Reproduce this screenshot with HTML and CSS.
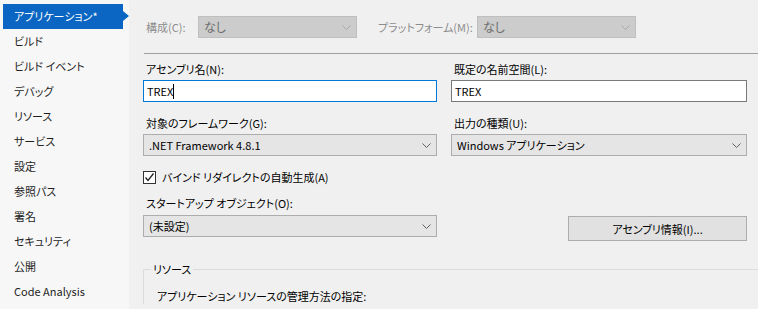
FILE: index.html
```html
<!DOCTYPE html>
<html lang="ja">
<head>
    <meta charset="UTF-8">
    <title>プロジェクト プロパティ - アプリケーション</title>
    <link rel="stylesheet" href="styles.css">
</head>
<body>
    <div class="window">
        <nav class="tabs">
            <div class="tab active">アプリケーション*</div>
            <div class="tab">ビルド</div>
            <div class="tab">ビルド イベント</div>
            <div class="tab">デバッグ</div>
            <div class="tab">リソース</div>
            <div class="tab">サービス</div>
            <div class="tab">設定</div>
            <div class="tab">参照パス</div>
            <div class="tab">署名</div>
            <div class="tab">セキュリティ</div>
            <div class="tab">公開</div>
            <div class="tab">Code Analysis</div>
        </nav>

        <main class="page">
            <div class="config-bar">
                <span class="config-label">構成(C):</span>
                <div class="combo disabled config-combo">なし<svg class="chevron" width="9" height="5" viewBox="0 0 9 5"><polyline points="0.5,0.5 4.5,4.5 8.5,0.5"/></svg></div>
                <span class="config-label platform">プラットフォーム(M):</span>
                <div class="combo disabled config-combo">なし<svg class="chevron" width="9" height="5" viewBox="0 0 9 5"><polyline points="0.5,0.5 4.5,4.5 8.5,0.5"/></svg></div>
            </div>

            <div class="form">
                <div class="field">
                    <label>アセンブリ名(N):</label>
                    <div class="textbox focused">TREX<span class="caret"></span></div>
                </div>
                <div class="field">
                    <label>既定の名前空間(L):</label>
                    <div class="textbox">TREX</div>
                </div>

                <div class="field">
                    <label>対象のフレームワーク(G):</label>
                    <div class="combo">.NET Framework 4.8.1<svg class="chevron" width="9" height="5" viewBox="0 0 9 5"><polyline points="0.5,0.5 4.5,4.5 8.5,0.5"/></svg></div>
                </div>
                <div class="field">
                    <label>出力の種類(U):</label>
                    <div class="combo">Windows アプリケーション<svg class="chevron" width="9" height="5" viewBox="0 0 9 5"><polyline points="0.5,0.5 4.5,4.5 8.5,0.5"/></svg></div>
                </div>

                <div class="check-row">
                    <span class="checkbox"><svg width="11" height="11" viewBox="0 0 11 11"><polyline points="1.5,5.5 4,8.5 9.5,1.5"/></svg></span>
                    <span>バインド リダイレクトの自動生成(A)</span>
                </div>

                <div class="field startup">
                    <label>スタートアップ オブジェクト(O):</label>
                    <div class="combo">(未設定)<svg class="chevron" width="9" height="5" viewBox="0 0 9 5"><polyline points="0.5,0.5 4.5,4.5 8.5,0.5"/></svg></div>
                </div>
                <div class="field button-cell">
                    <button class="button">アセンブリ情報(I)...</button>
                </div>
            </div>

            <fieldset class="group">
                <legend>リソース</legend>
                <p>アプリケーション リソースの管理方法の指定:</p>
            </fieldset>
        </main>
    </div>
</body>
</html>
```

FILE: styles.css
```css
* {
    margin: 0;
    padding: 0;
    box-sizing: border-box;
}

body {
    font-family: "Noto Sans CJK JP", "Noto Sans", sans-serif;
    font-size: 11px;
    font-feature-settings: "palt";
    color: #000;
    background: #f0f0f0;
    overflow: hidden;
}

.window {
    display: flex;
    width: 758px;
    height: 309px;
}

/* left tabs */
.tabs {
    width: 129px;
    flex-shrink: 0;
    background: #f7f7f7;
    padding: 4px 0 0 3px;
}

.tab {
    position: relative;
    width: 120px;
    height: 25px;
    line-height: 25px;
    padding-left: 11px;
    color: #1e1e1e;
    white-space: nowrap;
}

.tab.active {
    background: #0a66c2;
    color: #fff;
}

.tab.active::after {
    content: "";
    position: absolute;
    right: -6px;
    top: 7px;
    border-top: 5px solid transparent;
    border-bottom: 5px solid transparent;
    border-left: 6px solid #0a66c2;
}

/* right page */
.page {
    flex: 1;
    padding: 16px 12px 0 14px;
}

.config-bar {
    display: flex;
    align-items: center;
    height: 22px;
}

.config-label {
    flex-shrink: 0;
    color: #8d8d8d;
    width: 55px;
    padding-left: 3px;
    white-space: nowrap;
}

.config-label.platform {
    width: 99px;
    margin-left: 21px;
    padding-left: 0;
}

.combo {
    position: relative;
    flex-shrink: 0;
    height: 22px;
    line-height: 20px;
    padding-left: 5px;
    background: #e5e5e5;
    border: 1px solid #adadad;
    white-space: nowrap;
}

.combo.disabled {
    background: #cccccc;
    border-color: #bfbfbf;
    color: #6d6d6d;
    font-size: 12px;
}

.config-combo {
    width: 159px;
}

.chevron {
    position: absolute;
    right: 5px;
    top: 8px;
    fill: none;
    stroke: #606060;
    stroke-width: 1;
}

.combo.disabled .chevron {
    stroke: #a8a8a8;
}

.form {
    display: grid;
    grid-template-columns: 293px 295px;
    column-gap: 15px;
    border-top: 1px solid #a0a0a0;
    margin-top: 15px;
    margin-left: 1px;
    margin-right: -12px;
    padding-top: 7px;
    padding-right: 12px;
    row-gap: 13px;
}

.field {
    display: flex;
    flex-direction: column;
    margin-left: -1px;
}

.field label {
    line-height: 16px;
    padding-left: 3px;
    margin-bottom: 3px;
}

.textbox {
    height: 22px;
    line-height: 20px;
    padding-left: 3px;
    background: #fff;
    border: 1px solid #7a7a7a;
}

.textbox.focused {
    border-color: #0078d7;
}

.caret {
    display: inline-block;
    width: 1px;
    height: 15px;
    background: #000;
    vertical-align: -3px;
}

.check-row {
    grid-column: 1 / 3;
    display: flex;
    align-items: center;
    gap: 6px;
    height: 16px;
    margin-left: -1px;
}

.checkbox {
    display: flex;
    align-items: center;
    justify-content: center;
    width: 13px;
    height: 13px;
    background: #fff;
    border: 1px solid #333;
}

.checkbox polyline {
    fill: none;
    stroke: #222;
    stroke-width: 1.3;
}

.startup {
    margin-top: -3px;
}

.startup label {
    margin-bottom: 4px;
}

.button-cell {
    align-items: flex-end;
    justify-content: flex-end;
    margin-top: -3px;
}

.button {
    width: 179px;
    height: 25px;
    margin-bottom: -4px;
    font: inherit;
    font-feature-settings: "palt";
    background: #e1e1e1;
    border: 1px solid #adadad;
    color: #000;
}

.group {
    margin: 24px -12px 0 0;
    padding: 0 0 0 13px;
    border: none;
    border-top: 1px solid #dcdcdc;
    border-left: 1px solid #dcdcdc;
}

.group legend {
    margin-left: -6px;
    padding: 0 2px;
    line-height: 16px;
}

.group p {
    margin-top: 11px;
    line-height: 16px;
}
```
